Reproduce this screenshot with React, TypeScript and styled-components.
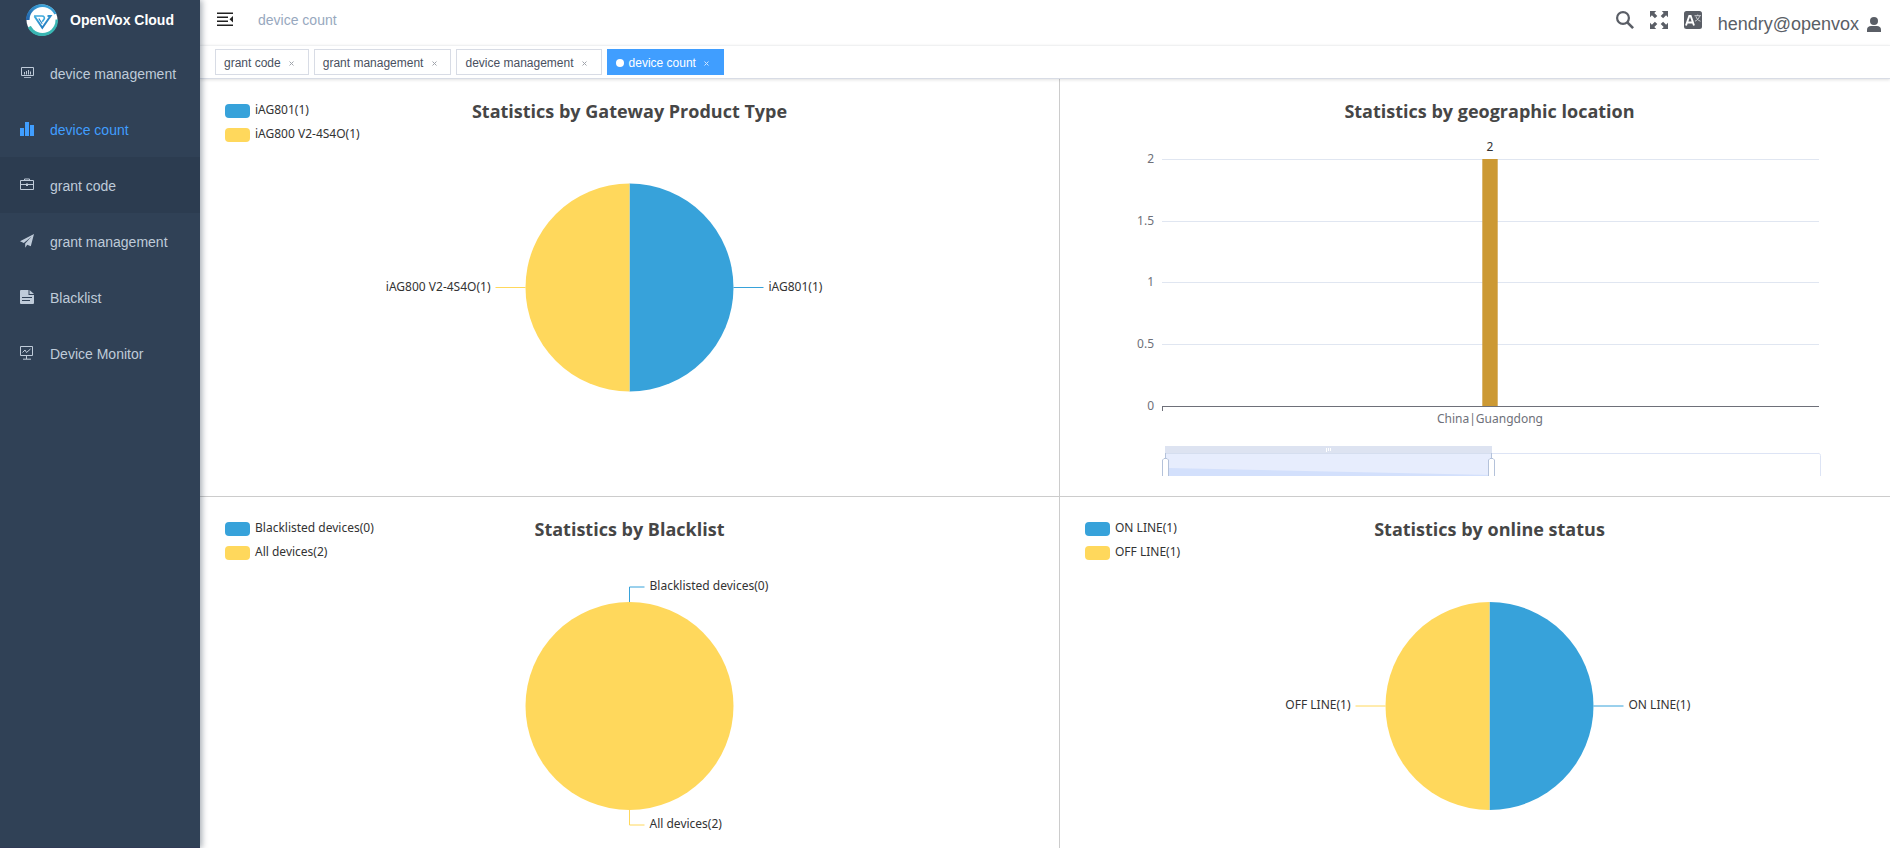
import React from "react";
import styled, { createGlobalStyle } from "styled-components";

const BLUE = "#37a2da";
const YELLOW = "#ffd85c";
const UI_FONT = '"Liberation Sans", Arial, sans-serif';
const TITLE_FONT = '"Open Sans", "Noto Sans", sans-serif';
const CHART_FONT = '"Noto Sans", "Open Sans", sans-serif';

const GlobalStyle = createGlobalStyle`
  *, *::before, *::after { box-sizing: border-box; }
  body { margin: 0; background: #fff; font-family: ${UI_FONT}; }
  svg { display: block; flex: none; }
`;

const Shell = styled.div`
  display: flex;
  height: 100vh;
  overflow: hidden;
`;

const Sidebar = styled.aside`
  z-index: 1;
  flex: none;
  width: 200px;
  background: #304156;
  border-bottom: 1px solid #303a56;
  box-shadow: 2px 0 6px rgba(0, 21, 41, 0.35);
`;

const Brand = styled.a`
  display: flex;
  align-items: center;
  gap: 12px;
  height: 45px;
  padding: 0 26px 5px;
  color: #fff;
  font-size: 14px;
  font-weight: 700;
  text-decoration: none;
  white-space: nowrap;
`;

const MenuLink = styled.a<{ $active?: boolean; $hovered?: boolean }>`
  display: flex;
  align-items: center;
  gap: 16px;
  height: 56px;
  padding: 0 20px;
  background: ${(p) => (p.$hovered ? "#2c3c50" : "transparent")};
  color: ${(p) => (p.$active ? "#409eff" : "#bfcbd9")};
  font-size: 14px;
  text-decoration: none;
  white-space: nowrap;
`;

const MenuText = styled.span`
  padding-top: 2px;
`;

const Main = styled.main`
  flex: 1;
  min-width: 0;
`;

const Navbar = styled.header`
  display: flex;
  align-items: center;
  height: 45px;
  padding: 0 9px 6px 17px;
`;

const IconButton = styled.button`
  display: flex;
  padding: 0;
  border: 0;
  background: none;
  color: #5a5e66;
  cursor: pointer;
`;

const Crumb = styled.span`
  margin-left: 25px;
  color: #97a8be;
  font-size: 14px;
`;

const NavTools = styled.div`
  display: flex;
  align-items: center;
  gap: 16px;
  margin-left: auto;
`;

const UserButton = styled.button`
  display: flex;
  align-items: center;
  gap: 8px;
  padding: 10px 0 0;
  border: 0;
  background: none;
  color: #5a5e66;
  font: 18px ${UI_FONT};
  cursor: pointer;
`;

const TagsBar = styled.nav`
  position: relative;
  display: flex;
  gap: 5px;
  height: 34px;
  padding: 3px 15px;
  background: #fff;
  border-top: 1px solid #f0f1f2;
  border-bottom: 1px solid #d8dce5;
  box-shadow: 0 1px 3px rgba(0, 0, 0, 0.12);
`;

const Tag = styled.div<{ $active?: boolean }>`
  display: flex;
  align-items: center;
  height: 26px;
  padding: 0 8px;
  border: 1px solid ${(p) => (p.$active ? "#409eff" : "#d8dce5")};
  background: ${(p) => (p.$active ? "#409eff" : "#fff")};
  color: ${(p) => (p.$active ? "#fff" : "#495060")};
  font-size: 12px;
  white-space: nowrap;
`;

const TagLink = styled.a`
  display: flex;
  align-items: center;
  gap: 5px;
  padding-top: 2px;
  color: inherit;
  text-decoration: none;
`;

const Dot = styled.i`
  width: 8px;
  height: 8px;
  border-radius: 50%;
  background: #fff;
`;

const TagClose = styled.button<{ $active?: boolean }>`
  display: flex;
  align-items: center;
  justify-content: center;
  width: 16px;
  height: 16px;
  margin: 2px 0 0 3px;
  padding: 0;
  border: 0;
  background: none;
  color: ${(p) => (p.$active ? "#cfe5ff" : "#a0a4ab")};
`;

/* The board is a little wider than the viewport, its right edge is clipped. */
const Board = styled.div`
  display: grid;
  grid-template-columns: 1fr 1fr;
  margin-right: -30px;
`;

const Panel = styled.section`
  height: 418px;
  padding: 25px 25px 0;
  border-right: 1px solid #ccc;
  border-bottom: 1px solid #ccc;
  font-family: ${CHART_FONT};
`;

const PanelHead = styled.div`
  display: grid;
  grid-template-columns: 1fr auto 1fr;
  height: 38px;
`;

const Legend = styled.ul`
  display: flex;
  flex-direction: column;
  gap: 10px;
  margin: 0;
  padding: 0;
  list-style: none;
`;

const LegendItem = styled.li`
  display: flex;
  align-items: center;
  gap: 5px;
  height: 14px;
  color: #333;
  font-size: 12px;
  line-height: 12px;
  white-space: nowrap;
`;

const LegendText = styled.span`
  padding-bottom: 2px;
`;

const Swatch = styled.i<{ $color: string }>`
  width: 25px;
  height: 14px;
  border-radius: 4px;
  background: ${(p) => p.$color};
`;

const Title = styled.h2`
  margin: 0;
  color: #464646;
  font-family: ${TITLE_FONT};
  font-size: 18px;
  font-weight: 700;
  line-height: 14px;
  white-space: nowrap;
`;

const Chart = styled.svg`
  margin: 0 auto;
  overflow: visible;
  font-family: ${CHART_FONT};
  font-size: 12px;
`;

const Logo = () => (
  <svg width="32" height="32" viewBox="0 0 32 32" aria-hidden="true">
    <defs>
      <linearGradient id="ringTop" x1="0" y1="1" x2="1" y2="0">
        <stop offset="0" stopColor="#1d5fa8" />
        <stop offset="1" stopColor="#45b8e8" />
      </linearGradient>
      <linearGradient id="mark" x1="0" y1="0" x2="1" y2="1">
        <stop offset="0" stopColor="#3fb0e0" />
        <stop offset="1" stopColor="#1f6fb8" />
      </linearGradient>
    </defs>
    <circle cx="16" cy="16" r="15.5" fill="#fff" />
    <path d="M0 16A16 16 0 0 1 30.500 9.500L16 16z" fill="url(#ringTop)" />
    <path d="M32 15.500A16 16 0 0 1 1.800 23.500L16 16z" fill="#39b5b2" />
    <circle cx="16.500" cy="16" r="13" fill="#fff" />
    <path d="M8 12h8c2.200 0 3 1.700 2 3.200l-1.800 2.600" fill="none" stroke="#3fa9dc" strokeWidth="1.600" />
    <path d="M8.500 12.200l7.800 11.600L24.500 12h-3" fill="none" stroke="url(#mark)" strokeWidth="2" />
    <path d="M12.800 14.500l3.400 5.300" fill="none" stroke="#2b86c8" strokeWidth="1.200" />
  </svg>
);

const DashboardIcon = () => (
  <svg width="14" height="14" viewBox="0 0 14 14" fill="none" stroke="currentColor">
    <path d="M1.500 1.500h12v8h-12zM4.500 8.500V6M6.500 8.500V5M8.500 8.500V4M10.500 8.500V5.500" />
    <path d="M4 11.500h7" opacity=".8" />
  </svg>
);

const BarsIcon = () => (
  <svg width="14" height="14" viewBox="0 0 14 14" fill="currentColor">
    <path d="M0 6h4v8H0zM5 0h4v14H5zM10 3h4v11h-4z" />
  </svg>
);

const CaseIcon = () => (
  <svg width="14" height="14" viewBox="0 0 14 14" fill="none" stroke="currentColor">
    <path d="M.5 2.500h13v9H.5zM4.500 2.500v-1.500h5v1.500M.5 6.500h13" />
    <path d="M6 5.500h2v2.500H6z" fill="currentColor" stroke="none" />
  </svg>
);

const PlaneIcon = () => (
  <svg width="14" height="14" viewBox="0 0 14 14" fill="currentColor">
    <path d="M14 0L0 7.300l3.800 1.600L11.600 2.600 5.200 9.500v4.300l2-3 3.600 1.500z" />
  </svg>
);

const DocIcon = () => (
  <svg width="14" height="14" viewBox="0 0 14 14" fill="currentColor">
    <path
      fillRule="evenodd"
      d="M1 0h7.500v5H14v8a1 1 0 0 1-1 1H1a1 1 0 0 1-1-1V1a1 1 0 0 1 1-1zM2 7v1h10V7zM2 10v1h8v-1z"
    />
    <path d="M9.500 0L14 4H9.500z" />
  </svg>
);

const MonitorIcon = () => (
  <svg width="14" height="14" viewBox="0 0 14 14" fill="none" stroke="currentColor">
    <path d="M.5.5h12v9H.5zM6.500 9.500v3.500M3 13.200h8" />
    <path d="M2.500 6.500l2.500-2.500 1.500 2.500L10.500 3" />
  </svg>
);

const FoldIcon = () => (
  <svg width="16" height="16" viewBox="0 0 16 16" fill="#222">
    <path d="M0 .500h16v1.500H0zM0 4.500h11v1.500H0zM0 8.500h11v1.500H0zM0 12.500h16v1.500H0zM16 4v6.500L12.500 7.300z" />
  </svg>
);

const SearchIcon = () => (
  <svg width="18" height="18" viewBox="0 0 18 18" fill="none" stroke="currentColor">
    <circle cx="7" cy="7" r="5.900" strokeWidth="2.200" />
    <path d="M11.300 11.300l5.800 5.800" strokeWidth="2.600" />
  </svg>
);

const FullscreenIcon = () => (
  <svg width="18" height="18" viewBox="0 0 18 18" fill="currentColor">
    {[0, 90, 180, 270].map((angle) => (
      <path
        key={angle}
        transform={`rotate(${angle} 9 9)`}
        d="M0 0h6.200L4.300 1.900l3 3-2.400 2.400-3-3L0 6.200z"
      />
    ))}
  </svg>
);

const LanguageIcon = () => (
  <svg width="18" height="18" viewBox="0 0 18 18">
    <rect width="18" height="18" rx="2.500" fill="#5a5e66" />
    <path d="M2 14.500L5.300 5h1.400L10 14.500M3.300 11.500h5.400" fill="none" stroke="#fff" strokeWidth="1.900" />
    <path d="M10.500 4.700h6.500M13.700 3.500v1.200M11 10.200c2.500-1 4-3 4.500-5M12 5.500c.5 2 2 4 4.500 4.700" fill="none" stroke="#d5d7da" strokeWidth=".9" />
  </svg>
);

const UserIcon = () => (
  <svg width="14" height="16" viewBox="0 0 14 16" fill="currentColor">
    <circle cx="7" cy="4" r="4" />
    <path d="M0 15v-2.500c0-2.200 1.800-3.500 4-3.500h6c2.200 0 4 1.300 4 3.500v2.500z" />
  </svg>
);

const CloseIcon = () => (
  <svg width="5" height="5" viewBox="0 0 5 5" stroke="currentColor">
    <path d="M.5.5l4 4M4.500.5l-4 4" />
  </svg>
);

type Series = { label: string; color: string };

const CX = 279.5;
const R = 104;

const SplitPie = ({ right, left, cy }: { right: Series; left: Series; cy: number }) => (
  <Chart width="559" height="334" viewBox="0 0 559 334" role="img">
    <path d={`M${CX} ${cy - R}a${R} ${R} 0 0 1 0 ${R * 2}z`} fill={right.color} />
    <path d={`M${CX} ${cy - R}a${R} ${R} 0 0 0 0 ${R * 2}z`} fill={left.color} />
    <path d={`M${CX + R} ${cy}h30`} stroke={right.color} />
    <path d={`M${CX - R} ${cy}h-30`} stroke={left.color} />
    <text x={CX + R + 35} y={cy + 3} fill="#333">
      {right.label}
    </text>
    <text x={CX - R - 35} y={cy + 3} fill="#333" textAnchor="end">
      {left.label}
    </text>
  </Chart>
);

const FullPie = ({ empty, full }: { empty: Series; full: Series }) => (
  <Chart width="559" height="334" viewBox="0 0 559 334" role="img">
    <circle cx={CX} cy="146" r={R} fill={full.color} />
    <path d={`M${CX} 42v-15h15`} stroke={empty.color} fill="none" />
    <path d={`M${CX} 250v15h15`} stroke={full.color} fill="none" />
    <text x={CX + 20} y="30" fill="#333">
      {empty.label}
    </text>
    <text x={CX + 20} y="268" fill="#333">
      {full.label}
    </text>
  </Chart>
);

const TICKS = [
  { value: "2", y: 17.5 },
  { value: "1.5", y: 79.5 },
  { value: "1", y: 140.5 },
  { value: "0.5", y: 202.5 },
  { value: "0", y: 264.5 },
];

const LocationChart = () => (
  <Chart width="739" height="334" viewBox="0 0 739 334" role="img">
    {TICKS.map((t) => (
      <g key={t.value}>
        {t.value !== "0" && <path d={`M42 ${t.y}h657`} stroke="#e0e6f1" shapeRendering="crispEdges" />}
        <text x="34" y={t.y + 3} fill="#6e7079" textAnchor="end">
          {t.value}
        </text>
      </g>
    ))}
    <rect x="362.300" y="17" width="15.400" height="248" fill="#c93" />
    <path d="M42 264.500h657M42.500 264v5" stroke="#6e7079" shapeRendering="crispEdges" />
    <text x="370" y="9" fill="#333" textAnchor="middle">
      2
    </text>
    <text x="370" y="281" fill="#6e7079" textAnchor="middle">
      China|Guangdong
    </text>

    <path d="M45 311.500h653a2 2 0 0 1 2.500 2V334" stroke="#dde4f5" fill="none" />
    <rect x="45" y="304" width="327" height="7" fill="#dde3f1" />
    <rect x="45" y="311" width="327" height="23" fill="#e7edfd" />
    <path d="M49 326l323 7v1H49z" fill="#d3e0fc" />
    <path d="M45 311.500h327" stroke="#d5deef" />
    <path d="M206.500 306v4M208.500 306v3M210.500 306v3" stroke="#fff" />
    {[45.5, 371.5].map((x) => (
      <g key={x} stroke="#b4c2da">
        <path d={`M${x} 311v5`} />
        <path d={`M${x - 3} 334v-16l1.500-1.500h3l1.500 1.500v16`} fill="#fff" />
      </g>
    ))}
  </Chart>
);

const MENU = [
  { label: "device management", icon: <DashboardIcon /> },
  { label: "device count", icon: <BarsIcon />, active: true },
  { label: "grant code", icon: <CaseIcon />, hovered: true },
  { label: "grant management", icon: <PlaneIcon /> },
  { label: "Blacklist", icon: <DocIcon /> },
  { label: "Device Monitor", icon: <MonitorIcon /> },
];

const TAGS = ["grant code", "grant management", "device management", "device count"];
const CURRENT = "device count";

const byType: Series[] = [
  { label: "iAG801(1)", color: BLUE },
  { label: "iAG800 V2-4S4O(1)", color: YELLOW },
];
const byBlacklist: Series[] = [
  { label: "Blacklisted devices(0)", color: BLUE },
  { label: "All devices(2)", color: YELLOW },
];
const byStatus: Series[] = [
  { label: "ON LINE(1)", color: BLUE },
  { label: "OFF LINE(1)", color: YELLOW },
];

const StatPanel = ({
  title,
  legend = [],
  children,
}: {
  title: string;
  legend?: Series[];
  children: React.ReactNode;
}) => (
  <Panel>
    <PanelHead>
      <Legend>
        {legend.map((s) => (
          <LegendItem key={s.label}>
            <Swatch $color={s.color} />
            <LegendText>{s.label}</LegendText>
          </LegendItem>
        ))}
      </Legend>
      <Title>{title}</Title>
    </PanelHead>
    {children}
  </Panel>
);

export default function App() {
  return (
    <>
      <GlobalStyle />
      <Shell>
        <Sidebar>
          <Brand href="#">
            <Logo />
            OpenVox Cloud
          </Brand>
          <nav>
            {MENU.map((m) => (
              <MenuLink key={m.label} href="#" $active={m.active} $hovered={m.hovered}>
                {m.icon}
                <MenuText>{m.label}</MenuText>
              </MenuLink>
            ))}
          </nav>
        </Sidebar>
        <Main>
          <Navbar>
            <IconButton aria-label="Toggle sidebar">
              <FoldIcon />
            </IconButton>
            <Crumb>device count</Crumb>
            <NavTools>
              <IconButton aria-label="Search">
                <SearchIcon />
              </IconButton>
              <IconButton aria-label="Fullscreen">
                <FullscreenIcon />
              </IconButton>
              <IconButton aria-label="Language">
                <LanguageIcon />
              </IconButton>
              <UserButton>
                hendry@openvox
                <UserIcon />
              </UserButton>
            </NavTools>
          </Navbar>
          <TagsBar>
            {TAGS.map((t) => (
              <Tag key={t} $active={t === CURRENT}>
                <TagLink href="#">
                  {t === CURRENT && <Dot />}
                  {t}
                </TagLink>
                <TagClose aria-label={`Close ${t}`} $active={t === CURRENT}>
                  <CloseIcon />
                </TagClose>
              </Tag>
            ))}
          </TagsBar>
          <Board>
            <StatPanel title="Statistics by Gateway Product Type" legend={byType}>
              <SplitPie right={byType[0]} left={byType[1]} cy={145.5} />
            </StatPanel>
            <StatPanel title="Statistics by geographic location">
              <LocationChart />
            </StatPanel>
            <StatPanel title="Statistics by Blacklist" legend={byBlacklist}>
              <FullPie empty={byBlacklist[0]} full={byBlacklist[1]} />
            </StatPanel>
            <StatPanel title="Statistics by online status" legend={byStatus}>
              <SplitPie right={byStatus[0]} left={byStatus[1]} cy={146} />
            </StatPanel>
          </Board>
        </Main>
      </Shell>
    </>
  );
}
